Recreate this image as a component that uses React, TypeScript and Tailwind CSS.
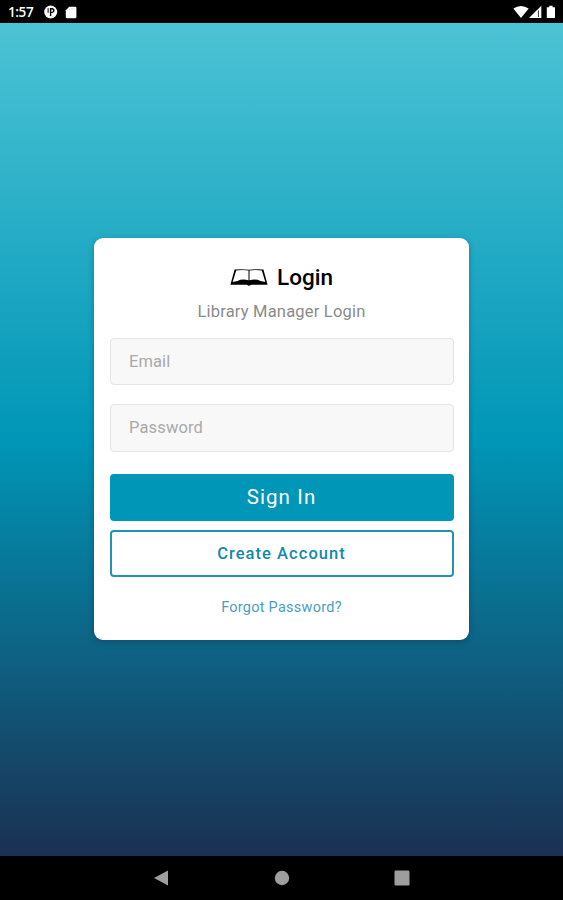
export default function App() {
  return (
    <div className="flex h-[900px] w-[563px] flex-col overflow-hidden bg-black font-['Roboto',sans-serif]">
      <header className="flex h-[23px] shrink-0 items-center justify-between pl-2 pr-[6px] text-white">
        <div className="flex items-center">
          <span className="w-[36px] pt-[2px] font-['Open_Sans',sans-serif] text-[13.5px] font-semibold leading-none tracking-[-0.4px]">1:57</span>
          <svg className="mt-[1px] h-[14px] w-[14px]" viewBox="0 0 14 14">
            <circle cx="6.7" cy="7" r="6.5" fill="#fff" />
            <path d="M6.6 11V3.8h1.4a1.8 1.8 0 0 1 0 3.6H6.6" fill="none" stroke="#000" strokeWidth="1.4" />
            <path d="M4.1 3.2v4.6" fill="none" stroke="#000" strokeWidth="1" />
          </svg>
          <svg className="ml-[7px] mt-[1px] h-[13px] w-[12px]" viewBox="0 0 12 13">
            <path d="M4.2 0.8H10.2Q11.4 0.8 11.4 2V11Q11.4 12.2 10.2 12.2H2Q0.8 12.2 0.8 11V4.3Z" fill="#fff" />
            <path d="M4.8 2.2v1.6M6.9 2.2v1.6M9 2.2v1.6" stroke="#bbb" strokeWidth=".6" />
          </svg>
        </div>
        <svg className="h-[16px] w-[46px]" viewBox="0 0 46 16">
          <path d="M2.3 4.6Q10-.8 17.7 4.6L10 14Z" fill="#fff" />
          <path d="M30.3 1.7V14H18Z" fill="#fff" />
          <path d="M27.4 6.5V13" stroke="#333" strokeWidth="1" />
          <path d="M35.8 3.2h2.4V1.7h3.4v1.5H44V14h-8.2Z" fill="#fff" />
        </svg>
      </header>
      <main className="flex min-h-0 flex-1 flex-col items-center bg-[linear-gradient(180deg,#4cc3d5_0%,#0096b7_50%,#1b3052_100%)] pt-[215px]">
        <section className="flex h-[402px] w-[375px] flex-col rounded-[9px] bg-white px-[15.5px] pt-[25px] shadow-[0_2px_6px_rgba(0,30,60,0.3)]">
          <div className="flex h-[28px] items-center justify-center gap-[9px]">
            <svg className="h-[20px] w-[38px]" viewBox="0 0 38 20">
              <path d="M4.6 2.6Q12 1.6 19 2.8Q26 1.6 33.4 2.6L37.6 17.8H21Q19 19.6 17 17.8H0.4Z" fill="#000" />
              <path d="M6.2 3.4Q13 2.6 18.5 3.6V13.2Q12 11.6 7.5 14L2.7 14.9Z" fill="#fff" />
              <path d="M31.8 3.4Q25 2.6 19.5 3.6V13.2Q26 11.6 30.5 14L35.3 14.9Z" fill="#fff" />
            </svg>
            <h1 className="text-[22.5px] font-medium leading-none text-black">Login</h1>
          </div>
          <p className="mt-[11px] text-center text-[16.5px] leading-[20px] tracking-[0.2px] text-[#8b8b8b]">Library Manager Login</p>
          <div className="mt-[16px] flex h-[47px] shrink-0 items-center rounded-[4px] border border-[#e5e5e5] bg-[#f8f8f8] pl-[18.5px] pt-[2px] text-[16.5px] tracking-[0.1px] text-[#a9a9a9]">Email</div>
          <div className="mt-[19px] flex h-[48px] shrink-0 items-center rounded-[4px] border border-[#e5e5e5] bg-[#f8f8f8] pl-[18.5px] pt-px text-[16.5px] tracking-[0.15px] text-[#a9a9a9]">Password</div>
          <button className="mt-[22px] h-[47px] shrink-0 rounded-[4px] bg-[#0096b7] text-[20.5px] tracking-[1.1px] text-white">Sign In</button>
          <button className="mt-[9px] h-[47px] shrink-0 rounded-[4px] border-2 border-[#1e93b3] pt-px text-[16.5px] font-medium tracking-[1.05px] text-[#1489ab]">Create Account</button>
          <a className="mt-[21px] text-center text-[14.5px] leading-[20px] tracking-[0.25px] text-[#4a9fbd]">Forgot Password?</a>
        </section>
      </main>
      <nav className="flex h-[44px] shrink-0 items-center justify-center">
        <svg className="h-[20px] w-[260px]" viewBox="0 0 260 20">
          <path d="M2 10L16 2.5V17.5Z" fill="#9e9e9e" />
          <circle cx="130" cy="10" r="7.2" fill="#9e9e9e" />
          <rect x="242.5" y="2.5" width="15" height="15" rx="1.2" fill="#9e9e9e" />
        </svg>
      </nav>
    </div>
  );
}
